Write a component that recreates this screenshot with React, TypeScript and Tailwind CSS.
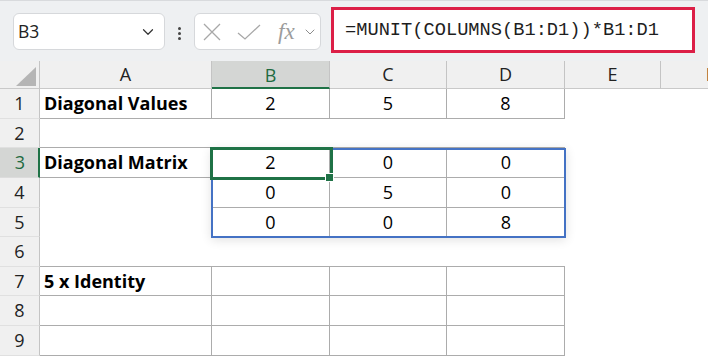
import React from "react";
import { ChevronDown } from "lucide-react";

const rows = [
  { n: 1, cells: ["Diagonal Values", "2", "5", "8", "", ""] },
  { n: 2, cells: ["", "", "", "", "", ""] },
  { n: 3, cells: ["Diagonal Matrix", "2", "0", "0", "", ""] },
  { n: 4, cells: ["", "0", "5", "0", "", ""] },
  { n: 5, cells: ["", "0", "0", "8", "", ""] },
  { n: 6, cells: ["", "", "", "", "", ""] },
  { n: 7, cells: ["5 x Identity", "", "", "", "", ""] },
  { n: 8, cells: ["", "", "", "", "", ""] },
  { n: 9, cells: ["", "", "", "", "", ""] },
];

// which cells carry a drawn border on their right / bottom edge
const hasRight = (r: number, c: number) => {
  if ([1, 7, 8, 9].includes(r)) return c <= 3;
  if ([3, 4, 5].includes(r)) return c === 1 || c === 2;
  return false;
};

const hasBottom = (r: number, c: number) => {
  if ([1, 2, 3, 6, 7, 8, 9].includes(r)) return c <= 3;
  if (r === 4) return c >= 1 && c <= 3;
  return false;
};

function Toolbar() {
  return (
    <div className="flex h-[61px] items-start border-t border-t-[#d8dadd] bg-[#eef0f2] pl-[13px]">
      {/* name box */}
      <div className="mt-[12px] flex h-[37px] w-[152px] items-center justify-between rounded-[6px] border border-[#d6d8db] bg-white pl-[4px] pr-[7px]">
        <span className="text-[17.5px] text-[#222]">B3</span>
        <ChevronDown className="h-[18px] w-[18px] text-[#333]" strokeWidth={1.6} />
      </div>

      {/* splitter */}
      <div className="mx-[13px] mt-[26px] flex flex-col gap-[2px]">
        <div className="h-[3px] w-[3px] rounded-full bg-[#444]" />
        <div className="h-[3px] w-[3px] rounded-full bg-[#444]" />
        <div className="h-[3px] w-[3px] rounded-full bg-[#444]" />
      </div>

      {/* cancel / enter / fx */}
      <div className="mt-[12px] flex h-[37px] w-[127px] items-center rounded-[6px] border border-[#d6d8db] bg-white pl-[8px]">
        <svg width="18" height="18" viewBox="0 0 18 18" className="shrink-0">
          <path d="M1 1 L17 17 M17 1 L1 17" stroke="#a8a8a8" strokeWidth="1.3" fill="none" />
        </svg>
        <svg width="24" height="18" viewBox="0 0 24 18" className="ml-[16px] shrink-0">
          <path d="M1 10 L8 16 L23 2" stroke="#a8a8a8" strokeWidth="1.3" fill="none" />
        </svg>
        <span className="ml-[17px] font-['Liberation_Serif'] text-[23px] italic leading-none text-[#9c9c9c]">fx</span>
        <ChevronDown className="ml-[7px] h-[16px] w-[16px] text-[#8c8c8c]" strokeWidth={1.5} />
      </div>

      {/* formula */}
      <div className="ml-[10px] mt-[6px] flex h-[46px] w-[364px] items-center border-[3px] border-[#dc1f47] bg-white pl-[11px]">
        <span className="font-['Liberation_Mono'] text-[18.7px] text-[#1e1e1e]">=MUNIT(COLUMNS(B1:D1))*B1:D1</span>
      </div>
    </div>
  );
}

function Sheet() {
  const letters = ["A", "B", "C", "D", "E", "F"];
  return (
    <div className="relative">
      <div className="grid grid-cols-[40px_172px_118px_117px_118px_96px_100px] grid-rows-[28px_30px_29px_30px_30px_29px_30px_29px_30px_30px]">
        {/* corner */}
        <div className="relative border-r border-b border-r-[#c4c4c4] border-b-[#c9c9c9] bg-[#f0f0f0]">
          <svg width="20" height="19" viewBox="0 0 20 19" className="absolute left-[16px] top-[6px]">
            <path d="M20 0 L20 19 L0 19 Z" fill="#b5b5b5" />
          </svg>
        </div>
        {letters.map((l) =>
          l === "B" ? (
            <div
              key={l}
              className="flex items-center justify-center border-r border-b-2 border-r-[#c4c4c4] border-b-[#1f7246] bg-[#d4d6d4] pt-[2px] text-[18px] text-[#1f6b41]"
            >
              {l}
            </div>
          ) : (
            <div
              key={l}
              className="flex items-center justify-center border-r border-b border-r-[#c4c4c4] border-b-[#c9c9c9] bg-[#f0f0f0] text-[18px] text-[#222]"
            >
              {l}
            </div>
          )
        )}

        {rows.map((row) => (
          <React.Fragment key={row.n}>
            {row.n === 3 ? (
              <div className="flex items-center justify-center border-r-2 border-b border-r-[#1f7246] border-b-[#dcdcdc] bg-[#d4d6d4] pl-[2px] text-[18px] text-[#1f6b41]">
                {row.n}
              </div>
            ) : (
              <div className="flex items-center justify-center border-r border-b border-r-[#c4c4c4] border-b-[#e0e0e0] bg-[#f0f0f0] text-[18px] text-[#222]">
                {row.n}
              </div>
            )}
            {row.cells.map((v, c) => (
              <div
                key={c}
                className={`flex items-center overflow-visible whitespace-nowrap bg-white text-[18px] text-black ${
                  c === 0 ? "pl-[4px] text-[18.5px] font-bold" : "justify-center"
                } ${hasRight(row.n, c) ? "border-r border-r-[#acacac]" : ""} ${
                  hasBottom(row.n, c) ? "border-b border-b-[#acacac]" : ""
                }`}
              >
                {v}
              </div>
            ))}
          </React.Fragment>
        ))}
      </div>

      {/* spill range outline */}
      <div className="pointer-events-none absolute left-[211px] top-[87px] h-[90px] w-[355px] border-2 border-[#4472c4] shadow-[0_2px_10px_rgba(0,0,0,0.12)]" />
      {/* active cell */}
      <div className="pointer-events-none absolute left-[210px] top-[86px] h-[33px] w-[123px] border-[3px] border-[#1f7246]" />
      <div className="pointer-events-none absolute left-[325px] top-[112px] h-[9px] w-[9px] border border-white bg-[#1f7246]" />
    </div>
  );
}

export default function App() {
  return (
    <div className="h-[357px] w-[708px] overflow-hidden bg-white font-['Open_Sans',sans-serif]">
      <Toolbar />
      <Sheet />
    </div>
  );
}
